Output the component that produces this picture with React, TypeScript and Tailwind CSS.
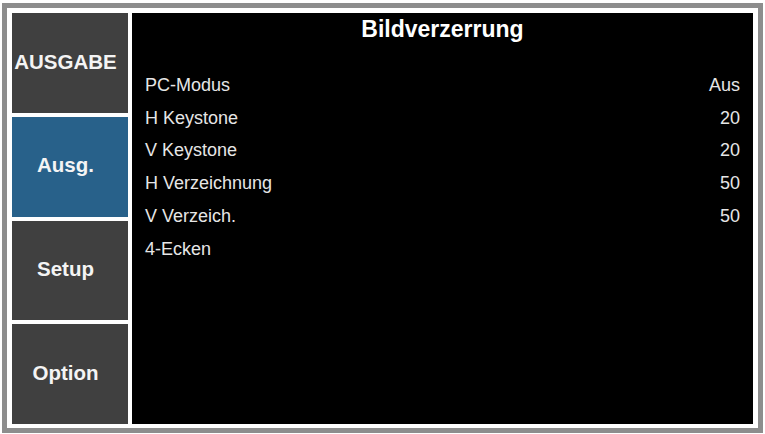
import React from "react";

type Row = { label: string; value?: string };

const tabs = [
  { name: "AUSGABE", active: false },
  { name: "Ausg.", active: true },
  { name: "Setup", active: false },
  { name: "Option", active: false },
];

const rows: Row[] = [
  { label: "PC-Modus", value: "Aus" },
  { label: "H Keystone", value: "20" },
  { label: "V Keystone", value: "20" },
  { label: "H Verzeichnung", value: "50" },
  { label: "V Verzeich.", value: "50" },
  { label: "4-Ecken" },
];

const App = () => {
  return (
    <div
      className="w-[765px] h-[434px] bg-white pt-[3px] pl-[2px] pr-[2px] pb-[1px]"
      style={{ fontFamily: '"Liberation Sans", Arial, sans-serif' }}
    >
      <div className="h-full border-[5px] border-[#8d8d8d] bg-white pl-[5px] pt-[5px] pr-[5px] pb-[4px]">
        <div className="h-full flex gap-[4px]">
          {/* menu tabs */}
          <div className="w-[116px] flex flex-col gap-[4px]">
            {tabs.map((t) => (
              <div
                key={t.name}
                className={
                  t.active
                    ? "flex-1 flex items-center justify-center pr-[9px] pb-[2px] bg-[#28618a] text-[20.5px] font-bold text-[#f4f4f4]"
                    : "flex-1 flex items-center justify-center pr-[9px] pb-[2px] bg-[#404040] text-[20.5px] font-bold text-[#f4f4f4]"
                }
              >
                {t.name}
              </div>
            ))}
          </div>

          {/* settings panel */}
          <div className="flex-1 bg-black px-[13px]">
            <div className="h-[32px] leading-[32px] text-center text-[23px] font-bold text-white">
              Bildverzerrung
            </div>
            <div className="mt-[24px]">
              {rows.map((r) => (
                <div
                  key={r.label}
                  className="h-[32.8px] flex items-center justify-between text-[18px] text-[#e6e6e6]"
                >
                  <span>{r.label}</span>
                  {r.value && <span>{r.value}</span>}
                </div>
              ))}
            </div>
          </div>
        </div>
      </div>
    </div>
  );
};

export default App;
